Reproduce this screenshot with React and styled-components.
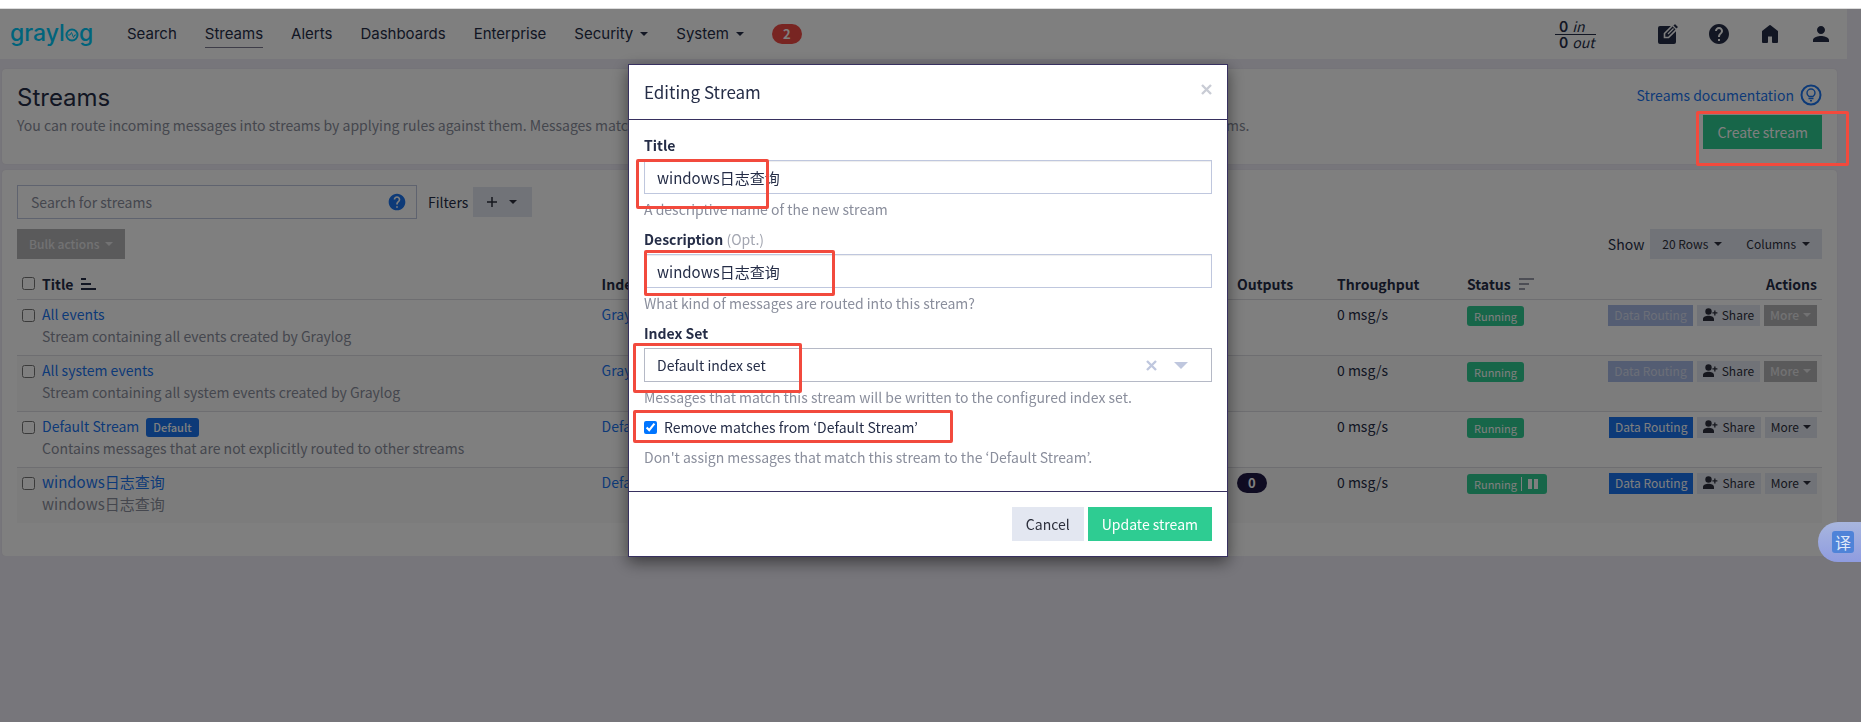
import React, { useState } from 'react';
import styled, { createGlobalStyle } from 'styled-components';
import { MdHelp, MdPerson } from 'react-icons/md';

const bodyFont = "'Noto Sans CJK SC', 'Noto Sans', sans-serif";
const navFont = "Inter, 'Liberation Sans', sans-serif";

const GlobalStyle = createGlobalStyle`
  * {
    box-sizing: border-box;
  }

  body {
    margin: 0;
    background: #eeecf6;
    color: #252d47;
    font-family: ${bodyFont};
    font-size: 14px;
    line-height: 22px;
  }

  button, input, select {
    font: inherit;
    color: inherit;
  }

  button {
    cursor: pointer;
  }
`;

const TopStrip = styled.div`
  height: 9px;
  background: #fff;
  border-bottom: 1px solid #dcdcdc;
`;

const Page = styled.div`
  padding-right: 14px;
`;

const Navbar = styled.header`
  display: flex;
  align-items: center;
  height: 50px;
  padding: 0 14px 0 11px;
  background: #fff;
  font-family: ${navFont};
`;

const LogoLink = styled.a`
  display: flex;
  margin-right: 34px;
  color: #00c8f8;
`;

const NavList = styled.nav`
  display: flex;
  align-items: center;
  gap: 28px;
  flex: 1;
  font-size: 15px;
`;

const NavLink = styled.a`
  color: #252d47;
  text-decoration: none;
  line-height: 26px;
  border-bottom: 1px solid ${({ $active }) => ($active ? '#7d7a90' : 'transparent')};
`;

const NavMenu = styled.button`
  display: flex;
  align-items: center;
  gap: 7px;
  padding: 0;
  border: none;
  background: none;
`;

const Count = styled.span`
  padding: 0 11px;
  border-radius: 10px;
  background: ${({ $color }) => $color};
  color: #fff;
  font-family: ${bodyFont};
  font-size: 13px;
  font-weight: 700;
  line-height: 20px;
  display: inline-block;
`;

const Throughput = styled.div`
  display: flex;
  flex-direction: column;
  width: 41px;
  margin-right: 60px;
  font-size: 14px;
  line-height: 15px;

  div {
    padding-left: 4px;
  }

  div + div {
    border-top: 1px solid #252d47;
  }

  b {
    font-weight: 600;
  }

  i {
    font-family: ${bodyFont};
  }
`;

const NavIcons = styled.div`
  display: flex;
  align-items: center;
  gap: 27px;
`;

const IconLink = styled.a`
  display: flex;
  color: #252d47;
`;

const Content = styled.main`
  display: flex;
  flex-direction: column;
  gap: 6px;
  padding: 10px 10px 0 2px;
`;

const Section = styled.section`
  padding: 15px 15px ${({ $bottom }) => $bottom}px;
  border-radius: 4px;
  background: #fff;
  box-shadow: 0 0 1px #d8d6e0;
`;

const HeaderRow = styled.div`
  display: flex;
  justify-content: space-between;
`;

const HeaderSide = styled.div`
  display: flex;
  flex-direction: column;
  align-items: flex-end;
  gap: 9px;
`;

const PageTitle = styled.h1`
  margin: 0;
  font-family: ${navFont};
  font-size: 24px;
  font-weight: 400;
  line-height: 28px;
`;

const Lead = styled.p`
  margin: 2px 0 0;
  color: #8a8e9c;
`;

const TextLink = styled.a`
  color: #1a75f0;
  text-decoration: none;
  font-size: ${({ $large }) => ($large ? 15 : 14)}px;
`;

const DocLink = styled(TextLink)`
  display: flex;
  align-items: center;
  gap: 6px;
`;

const variants = {
  success: 'background: #2ecc92; color: #fff;',
  primary: 'background: #1a75f0; color: #fff;',
  primaryOff: 'background: #a9bbe6; color: #d8def0;',
  grayOff: 'background: #b4b4b7; color: #e4e4e6; font-weight: 500;',
  plain: 'background: #e3e7f1; color: #2c2f3c;',
};

const Button = styled.button`
  display: inline-flex;
  align-items: center;
  justify-content: center;
  height: 34px;
  padding: 0 14px;
  border: none;
  white-space: nowrap;
  ${({ $variant }) => variants[$variant || 'plain']}
`;

const SmallButton = styled(Button)`
  height: 30px;
  padding: 0 12px;
  gap: 6px;
  font-size: 12px;
`;

const TinyButton = styled(Button)`
  height: 21px;
  padding: 0 6px;
  gap: 4px;
  font-size: 12px;
`;

const Toolbar = styled.div`
  display: flex;
  align-items: center;
  margin-bottom: 10px;
`;

const SearchBox = styled.div`
  display: flex;
  align-items: center;
  width: 400px;
  height: 34px;
  margin-right: 11px;
  padding: 0 9px 0 13px;
  border: 1px solid #bfc7de;
  background: #fff;

  input {
    flex: 1;
    min-width: 0;
    padding: 0;
    border: none;
    outline: none;
    background: none;
  }

  input::placeholder {
    color: #8a8e9c;
  }
`;

const IconButton = styled.button`
  display: flex;
  padding: 0;
  border: none;
  background: none;
  color: ${({ $color }) => $color};
`;

const FilterButton = styled(SmallButton)`
  gap: 12px;
  padding: 0 15px 0 14px;
  margin-left: 5px;
`;

const TableControls = styled(Toolbar)`
  justify-content: space-between;
`;

const ShowGroup = styled.div`
  display: flex;
  align-items: center;

  span {
    margin-right: 6px;
  }
`;

const Table = styled.table`
  width: 100%;
  table-layout: fixed;
  border-collapse: collapse;
`;

const Col = styled.col`
  width: ${({ $width }) => $width};
`;

const Th = styled.th`
  height: 30px;
  padding: 0 5px;
  border-bottom: 1px solid #dcdce2;
  text-align: ${({ $align }) => $align || 'left'};
  font-weight: 700;
`;

const ThContent = styled.div`
  display: flex;
  align-items: center;
  gap: 8px;
`;

const Row = styled.tr`
  height: 56px;
  background: ${({ $striped }) => ($striped ? '#f9f9f9' : '#fff')};

  & + & {
    border-top: 1px solid #dcdce2;
  }
`;

const Td = styled.td`
  padding: 3px 5px 6px;
  vertical-align: top;
`;

const Checkbox = styled.input`
  width: 13px;
  height: 13px;
  margin: ${({ $inCell }) => ($inCell ? '6px 0 0' : '0')};
  display: block;
`;

const StreamDescription = styled.div`
  color: #8a8e9c;
  font-size: ${({ $large }) => ($large ? 15 : 14)}px;
`;

const DefaultTag = styled.span`
  display: inline-block;
  margin-left: 7px;
  padding: 0 7px;
  border-radius: 3px;
  background: #1a75f0;
  color: #fff;
  font-size: 11px;
  font-weight: 500;
  line-height: 19px;
`;

const StatusLabel = styled.button`
  display: flex;
  align-items: center;
  gap: 4px;
  height: 20px;
  margin-top: 3px;
  padding: 0 7px;
  border: none;
  border-radius: 3px;
  background: #2ecc92;
  color: #fff;
  font-size: 11px;
`;

const PauseMark = styled.span`
  display: flex;
  gap: 2px;
  padding: 2px 2px 2px 6px;
  border-left: 1px solid #fff;

  i {
    width: 4px;
    height: 10px;
    background: #fff;
  }
`;

const Actions = styled.div`
  display: flex;
  justify-content: flex-end;
  gap: 4px;
  margin-top: 2px;
`;

const Overlay = styled.div`
  position: fixed;
  top: 9px;
  right: 0;
  bottom: 0;
  left: 0;
  padding: 55px 5px 0 0;
  background: rgba(0, 0, 0, 0.5);
`;

const Modal = styled.form`
  max-width: 600px;
  margin: 0 auto;
  border: 1px solid #37305f;
  background: #fff;
  box-shadow: 0 5px 15px rgba(0, 0, 0, 0.5);
`;

const ModalHeader = styled.div`
  display: flex;
  justify-content: space-between;
  padding: 15px 15px 16px;
  border-bottom: 1px solid #37305f;

  h2 {
    margin: 0;
    font-size: 17px;
    font-weight: 400;
    line-height: 23px;
  }

  button {
    align-self: flex-start;
    margin-top: 4px;
  }
`;

const ModalBody = styled.div`
  padding: 15px 15px 23px;
`;

const Field = styled.div`
  position: relative;
  margin-bottom: 9px;
`;

const FieldLabel = styled.label`
  display: block;
  margin-bottom: 5px;
  font-weight: 700;
  line-height: 20px;

  span {
    color: #a3a6b1;
    font-weight: 400;
  }
`;

const TextInput = styled.input`
  display: block;
  width: 100%;
  height: 34px;
  padding: 0 12px;
  border: 1px solid #bfc7de;
  border-radius: 0;
  background: #fff;
  font-size: 15px;
  box-shadow: inset 0 1px 1px rgba(0, 0, 0, 0.075);
`;

const SelectBox = styled.div`
  display: flex;
  align-items: center;
  gap: 17px;
  height: 34px;
  padding: 0 23px 0 12px;
  border: 1px solid #b5b9c6;

  select {
    flex: 1;
    padding: 0;
    border: none;
    outline: none;
    appearance: none;
    background: none;
  }
`;

// the KR face keeps curly quotes at their proportional width
const Help = styled.div`
  margin-top: ${({ $flush }) => ($flush ? 0 : 4)}px;
  color: #8a8e9c;
  font-family: 'Noto Sans CJK KR', sans-serif;
`;

const CheckField = styled(Field)`
  label {
    display: flex;
    align-items: center;
    gap: 7px;
    font-family: 'Noto Sans CJK KR', sans-serif;
    line-height: 20px;
  }
`;

const ModalFooter = styled.div`
  display: flex;
  justify-content: flex-end;
  gap: 4px;
  padding: 15px;
  border-top: 1px solid #37305f;
`;

const Marker = styled.div`
  position: absolute;
  top: ${({ $top }) => $top}px;
  left: ${({ $left }) => $left}px;
  width: ${({ $width }) => $width}px;
  height: ${({ $height }) => $height}px;
  border: 3px solid #f24a3d;
  border-radius: 2px;
  pointer-events: none;
`;

const CreateMarker = styled(Marker)`
  left: auto;
  right: 12px;
`;

const TranslateButton = styled.button`
  position: fixed;
  top: 522px;
  right: 0;
  display: flex;
  align-items: center;
  width: 43px;
  height: 40px;
  padding: 0 0 0 14px;
  border: none;
  border-radius: 20px 0 0 20px;
  background: linear-gradient(#a8b6de, #8f9ce0);

  span {
    width: 22px;
    border-radius: 3px;
    background: #4f83d8;
    color: #dfe8f8;
    font-size: 16px;
    line-height: 22px;
  }
`;

const Caret = ({ size = 8, color = 'currentColor' }) => (
  <svg width={size} height={size / 2} viewBox="0 0 8 4" aria-hidden="true">
    <path d="M0 0h8L4 4z" fill={color} />
  </svg>
);

const Cross = () => (
  <svg width="11" height="11" viewBox="0 0 11 11" stroke="currentColor" strokeWidth="2.400" aria-hidden="true">
    <path d="M1 1l9 9M10 1L1 10" />
  </svg>
);

const Logo = () => (
  <svg width="82" height="32" viewBox="0 0 82 32" fill="currentColor" role="img" aria-label="graylog">
    <text x="-1" y="23" fontFamily="Inter" fontSize="23" fontWeight="500">grayl</text>
    <circle cx="61" cy="17" r="5.500" fill="none" stroke="currentColor" strokeWidth="2" />
    <path d="M57 17h2l1.500-2.500 2 5 1.300-2.500H65" fill="none" stroke="currentColor" />
    <text x="68" y="23" fontFamily="Inter" fontSize="23" fontWeight="500">g</text>
  </svg>
);

const EditSquare = () => (
  <svg width="24" height="24" viewBox="0 0 24 24" aria-hidden="true">
    <rect x="2" y="4" width="18" height="18" rx="2" fill="currentColor" />
    <path d="M8.500 15.500v-4L19 1l4 4-10.500 10.500z" fill="currentColor" stroke="#fff" strokeWidth="1.600" />
    <path d="M17 4l3.500 3.500" stroke="#fff" strokeWidth="1.200" />
    <path d="M12 12l5.500-5.500" stroke="#fff" strokeWidth="1.200" />
  </svg>
);

const Home = () => (
  <svg width="24" height="24" viewBox="0 0 24 24" aria-hidden="true">
    <path
      d="M5 9.500L12 4l7 5.500V20h-4v-6.500H9V20H5z"
      fill="currentColor"
      stroke="currentColor"
      strokeWidth="2"
      strokeLinejoin="round"
    />
  </svg>
);

const Lightbulb = () => (
  <svg width="22" height="22" viewBox="0 0 22 22" fill="none" stroke="currentColor" aria-hidden="true">
    <circle cx="11" cy="11" r="9.500" strokeWidth="2" />
    <path d="M9 12.500C7.500 11.500 7 10.300 7 9a4 4 0 0 1 8 0c0 1.300-.5 2.500-2 3.500z" strokeWidth="1.400" />
    <path d="M8.500 14.500h5M10 16.800h2" strokeWidth="1.400" />
  </svg>
);

const UserPlus = () => (
  <svg width="15" height="14" viewBox="0 0 15 14" fill="currentColor" aria-hidden="true">
    <circle cx="5.500" cy="3.500" r="3.200" />
    <path d="M0 13v-2c0-2 3-3.200 5.500-3.200S11 9 11 11v2zM11.200 2.500h1.300v1.800h1.900v1.300h-1.900v1.900h-1.300V5.600H9.400V4.300h1.800z" />
  </svg>
);

const SortIcon = ({ desc }) => (
  <svg width="15" height="12" viewBox="0 0 15 12" stroke={desc ? '#9a9daa' : '#252d47'} strokeWidth="2" aria-hidden="true">
    <path d={desc ? 'M0 1h15M0 6h10M0 11h6' : 'M0 1h5M0 6h10M0 11h15'} />
  </svg>
);

const streams = [
  { title: 'All events', description: 'Stream containing all events created by Graylog', index: 'Graylog Events', locked: true },
  { title: 'All system events', description: 'Stream containing all system events created by Graylog', index: 'Graylog System Events', locked: true },
  { title: 'Default Stream', description: 'Contains messages that are not explicitly routed to other streams', index: 'Default index set', isDefault: true },
  { title: 'windows日志查询', description: 'windows日志查询', index: 'Default index set', outputs: 0, pausable: true, large: true },
];

function StreamRow({ stream, striped }) {
  return (
    <Row $striped={striped}>
      <Td><Checkbox type="checkbox" $inCell aria-label={`Select ${stream.title}`} /></Td>
      <Td>
        <TextLink href="#stream" $large={stream.large}>{stream.title}</TextLink>
        {stream.isDefault && <DefaultTag>Default</DefaultTag>}
        <StreamDescription $large={stream.large}>{stream.description}</StreamDescription>
      </Td>
      <Td><TextLink href="#index">{stream.index}</TextLink></Td>
      <Td>{stream.outputs !== undefined && <Count $color="#1f1844">{stream.outputs}</Count>}</Td>
      <Td>0 msg/s</Td>
      <Td>
        <StatusLabel type="button">
          Running
          {stream.pausable && <PauseMark><i /><i /></PauseMark>}
        </StatusLabel>
      </Td>
      <Td>
        <Actions>
          <TinyButton type="button" $variant={stream.locked ? 'primaryOff' : 'primary'} disabled={stream.locked}>
            Data Routing
          </TinyButton>
          <TinyButton type="button"><UserPlus />Share</TinyButton>
          <TinyButton type="button" $variant={stream.locked ? 'grayOff' : 'plain'} disabled={stream.locked}>
            More <Caret />
          </TinyButton>
        </Actions>
      </Td>
    </Row>
  );
}

function EditStreamModal() {
  const [title, setTitle] = useState('windows日志查询');
  const [description, setDescription] = useState('windows日志查询');
  const [removeMatches, setRemoveMatches] = useState(true);

  return (
    <Overlay>
      <Modal role="dialog" aria-labelledby="modal-title" onSubmit={(e) => e.preventDefault()}>
        <ModalHeader>
          <h2 id="modal-title">Editing Stream</h2>
          <IconButton type="button" $color="#c9ccd5" aria-label="Close"><Cross /></IconButton>
        </ModalHeader>
        <ModalBody>
          <Field>
            <FieldLabel htmlFor="title">Title</FieldLabel>
            <TextInput id="title" value={title} onChange={(e) => setTitle(e.target.value)} />
            <Help>A descriptive name of the new stream</Help>
            <Marker $top={24} $left={-8} $width={133} $height={50} />
          </Field>
          <Field>
            <FieldLabel htmlFor="description">Description <span>(Opt.)</span></FieldLabel>
            <TextInput id="description" value={description} onChange={(e) => setDescription(e.target.value)} />
            <Help>What kind of messages are routed into this stream?</Help>
            <Marker $top={21} $left={0} $width={191} $height={46} />
          </Field>
          <Field>
            <FieldLabel htmlFor="index-set">Index Set</FieldLabel>
            <SelectBox>
              <select id="index-set" defaultValue="default">
                <option value="default">Default index set</option>
              </select>
              <IconButton type="button" $color="#bfc7de" aria-label="Clear"><Cross /></IconButton>
              <Caret size={14} color="#bfc7de" />
            </SelectBox>
            <Help>Messages that match this stream will be written to the configured index set.</Help>
            <Marker $top={20} $left={-11} $width={169} $height={50} />
          </Field>
          <CheckField>
            <label>
              <Checkbox type="checkbox" checked={removeMatches} onChange={(e) => setRemoveMatches(e.target.checked)} />
              Remove matches from ‘Default Stream’
            </label>
            <Marker $top={-7} $left={-11} $width={320} $height={33} />
          </CheckField>
          <Help $flush>Don't assign messages that match this stream to the ‘Default Stream’.</Help>
        </ModalBody>
        <ModalFooter>
          <Button type="button">Cancel</Button>
          <Button type="submit" $variant="success">Update stream</Button>
        </ModalFooter>
      </Modal>
      <CreateMarker $top={102} $width={153} $height={55} />
    </Overlay>
  );
}

export default function App() {
  return (
    <>
      <GlobalStyle />
      <TopStrip />
      <Page>
        <Navbar>
          <LogoLink href="#home"><Logo /></LogoLink>
          <NavList>
            <NavLink href="#search">Search</NavLink>
            <NavLink href="#streams" $active>Streams</NavLink>
            <NavLink href="#alerts">Alerts</NavLink>
            <NavLink href="#dashboards">Dashboards</NavLink>
            <NavLink href="#enterprise">Enterprise</NavLink>
            <NavMenu type="button">Security <Caret /></NavMenu>
            <NavMenu type="button">System <Caret /></NavMenu>
            <Count $color="#f04a45">2</Count>
          </NavList>
          <Throughput>
            <div><b>0</b> <i>in</i></div>
            <div><b>0</b> <i>out</i></div>
          </Throughput>
          <NavIcons>
            <IconLink href="#scratchpad" aria-label="Scratchpad"><EditSquare /></IconLink>
            <IconLink href="#help" aria-label="Help"><MdHelp size={24} /></IconLink>
            <IconLink href="#welcome" aria-label="Welcome"><Home /></IconLink>
            <IconLink href="#user" aria-label="User"><MdPerson size={24} /></IconLink>
          </NavIcons>
        </Navbar>
        <Content>
          <Section $bottom={15}>
            <HeaderRow>
              <div>
                <PageTitle>Streams</PageTitle>
                <Lead>
                  You can route incoming messages into streams by applying rules against them. Messages matching the rules of a
                  stream are routed into it. A message can also be routed into multiple streams.
                </Lead>
              </div>
              <HeaderSide>
                <DocLink href="#docs">Streams documentation <Lightbulb /></DocLink>
                <Button type="button" $variant="success">Create stream</Button>
              </HeaderSide>
            </HeaderRow>
          </Section>
          <Section $bottom={33}>
            <Toolbar>
              <SearchBox>
                <input type="search" placeholder="Search for streams" aria-label="Search for streams" />
                <IconButton type="button" $color="#1a75f0" aria-label="Search help"><MdHelp size={20} /></IconButton>
              </SearchBox>
              Filters
              <FilterButton type="button" aria-label="Add filter">
                <svg width="10" height="10" viewBox="0 0 10 10" stroke="currentColor" strokeWidth="1.500" aria-hidden="true">
                  <path d="M5 0v10M0 5h10" />
                </svg>
                <Caret />
              </FilterButton>
            </Toolbar>
            <TableControls>
              <SmallButton type="button" $variant="grayOff" disabled>Bulk actions <Caret /></SmallButton>
              <ShowGroup>
                <span>Show</span>
                <SmallButton type="button">20 Rows <Caret /></SmallButton>
                <SmallButton type="button">Columns <Caret /></SmallButton>
              </ShowGroup>
            </TableControls>
            <Table>
              <colgroup>
                <Col $width="20px" />
                <Col $width="31%" />
                <Col />
                <Col $width="100px" />
                <Col $width="130px" />
                <Col $width="120px" />
                <Col $width="240px" />
              </colgroup>
              <thead>
                <tr>
                  <Th><Checkbox type="checkbox" aria-label="Select all" /></Th>
                  <Th><ThContent>Title <SortIcon /></ThContent></Th>
                  <Th>Index Set</Th>
                  <Th>Outputs</Th>
                  <Th>Throughput</Th>
                  <Th><ThContent>Status <SortIcon desc /></ThContent></Th>
                  <Th $align="right">Actions</Th>
                </tr>
              </thead>
              <tbody>
                {streams.map((stream, i) => (
                  <StreamRow key={stream.title} stream={stream} striped={i % 2 === 1} />
                ))}
              </tbody>
            </Table>
          </Section>
        </Content>
      </Page>
      <EditStreamModal />
      <TranslateButton type="button" aria-label="Translate"><span>译</span></TranslateButton>
    </>
  );
}
